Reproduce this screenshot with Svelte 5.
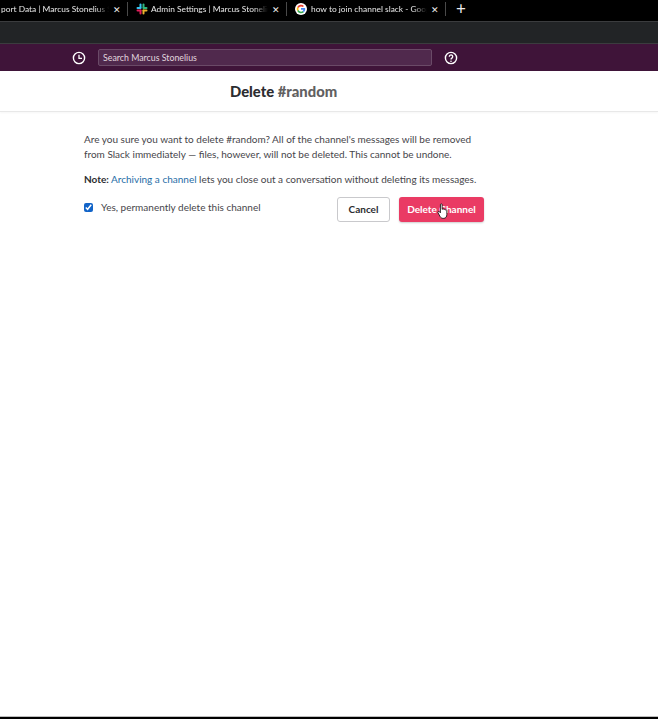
<script lang="ts">
  let confirmed = true;
  const slackBars = ["#36c5f0", "#2eb67d", "#ecb22e", "#e01e5a"];
</script>

<div class="page">
  <div class="tabs">
    <div class="tab first">
      <span class="tab-title">port Data | Marcus Stonelius Sl</span>
      <span class="close">✕</span>
    </div>
    <div class="tab second">
      <svg class="fav" viewBox="0 0 12 12" width="12" height="12">
        <rect x="3.5" y="0.5" width="2" height="5" rx="1" fill={slackBars[0]} />
        <rect x="0.5" y="4" width="5" height="2" rx="1" fill={slackBars[0]} />
        <rect x="6.5" y="0.5" width="2" height="5" rx="1" fill={slackBars[1]} />
        <rect x="6.5" y="4" width="5" height="2" rx="1" fill={slackBars[1]} />
        <rect x="6.5" y="6.5" width="2" height="5" rx="1" fill={slackBars[2]} />
        <rect x="6.5" y="6.5" width="5" height="2" rx="1" fill={slackBars[2]} />
        <rect x="3.5" y="6.5" width="2" height="5" rx="1" fill={slackBars[3]} />
        <rect x="0.5" y="6.5" width="5" height="2" rx="1" fill={slackBars[3]} />
      </svg>
      <span class="tab-title">Admin Settings | Marcus Stonelius</span>
      <span class="close">✕</span>
    </div>
    <div class="tab third">
      <svg class="fav" viewBox="0 0 12 12" width="12" height="12">
        <circle cx="6" cy="6" r="6" fill="#fff" />
        <path d="M6 3.400a2.600 2.600 0 0 1 1.800.7l1.200-1.200A4.300 4.300 0 0 0 2.200 4l1.400 1.100A2.600 2.600 0 0 1 6 3.400z" fill="#ea4335" />
        <path d="M2.200 4a4.300 4.300 0 0 0 0 4l1.400-1.100a2.600 2.600 0 0 1 0-1.800z" fill="#fbbc05" />
        <path d="M2.200 8a4.300 4.300 0 0 0 6.700 1.200L7.600 8.100a2.600 2.600 0 0 1-4-1.200z" fill="#34a853" />
        <path d="M10.200 6c0-.3 0-.6-.1-.9H6v1.700h2.400a2 2 0 0 1-.8 1.300l1.300 1.100c.8-.7 1.300-1.800 1.300-3.200z" fill="#4285f4" />
      </svg>
      <span class="tab-title">how to join channel slack - Goog</span>
      <span class="close">✕</span>
    </div>
    <span class="new-tab">+</span>
  </div>

  <div class="toolbar"></div>

  <div class="slack-bar">
    <svg class="bar-icon" viewBox="0 0 14 14" width="14" height="14">
      <circle cx="7" cy="7" r="5.600" fill="none" stroke="#fff" stroke-width="1.400" />
      <path d="M7 3.800V7.300H10" fill="none" stroke="#fff" stroke-width="1.300" />
    </svg>
    <div class="search">Search Marcus Stonelius</div>
    <svg class="bar-icon" viewBox="0 0 14 14" width="14" height="14">
      <circle cx="7" cy="7" r="5.600" fill="none" stroke="#fff" stroke-width="1.400" />
      <path d="M5.300 5.700a1.700 1.700 0 1 1 2.600 1.400c-.6.4-.9.7-.9 1.300" fill="none" stroke="#fff" stroke-width="1.300" />
      <circle cx="7" cy="10.200" r=".8" fill="#fff" />
    </svg>
  </div>

  <header class="head">
    <h1>Delete <span class="channel">#random</span></h1>
  </header>

  <main class="body">
    <p class="warning">
      Are you sure you want to delete #random? All of the channel's messages will be removed
      from Slack immediately — files, however, will not be deleted. This cannot be undone.
    </p>
    <p class="note">
      <strong>Note:</strong> <a href="#archive">Archiving a channel</a> lets you close out a conversation without deleting its messages.
    </p>
    <div class="actions">
      <label class="confirm">
        <input type="checkbox" bind:checked={confirmed} />
        Yes, permanently delete this channel
      </label>
      <button class="btn cancel">Cancel</button>
      <div class="danger-wrap">
        <button class="btn danger">Delete Channel</button>
        <svg class="cursor" viewBox="0 0 14 19" width="12" height="17">
          <path d="M4 1.500c0-1.300 2-1.300 2 0V7l.5-.3c.5-.4 1.500-.2 1.700.4.500-.4 1.400-.2 1.700.5.600-.3 1.500 0 1.600.8V13c0 2.500-1.300 4.500-3.500 4.500H7c-1.500 0-2.500-.8-3.300-2L1.200 11c-.7-1.300.8-2.200 1.700-1.200L4 11z" fill="#fff" stroke="#111" stroke-width="1" stroke-linejoin="round" />
        </svg>
      </div>
    </div>
  </main>

  <div class="bottom"></div>
</div>

<style>
  :global(body) {
    margin: 0;
    background: #fff;
  }
  .page {
    height: 719px;
    width: 658px;
    overflow: hidden;
    display: flex;
    flex-direction: column;
    font-family: Lato, "Open Sans", sans-serif;
    color: #2c2d30;
  }
  .tabs {
    height: 21px;
    flex: none;
    background: #000;
    display: flex;
    align-items: center;
    color: #e8e8e8;
    font-family: Lato, sans-serif;
    font-size: 8.4px;
    box-sizing: border-box;
    padding-bottom: 3px;
  }
  .tab {
    display: flex;
    align-items: center;
    height: 14px;
    flex: none;
    box-sizing: border-box;
    border-right: 1px solid #4a4a4a;
  }
  .tab.first {
    width: 128px;
    justify-content: flex-end;
    padding-right: 6px;
  }
  .tab.first .tab-title {
    flex: none;
    width: 108px;
    text-align: left;
  }
  .tab.second {
    width: 159px;
    padding-left: 8px;
    padding-right: 6px;
  }
  .tab.third {
    width: 159px;
    padding-left: 8px;
    padding-right: 6px;
  }
  .fav {
    flex: none;
    margin-right: 3px;
  }
  .tab.third .fav {
    margin-right: 4px;
  }
  .tab-title {
    flex: 1;
    min-width: 0;
    white-space: nowrap;
    overflow: hidden;
    mask-image: linear-gradient(to right, #000 88%, transparent);
  }
  .close {
    flex: none;
    font-size: 9px;
    color: #eee;
    margin-left: 4px;
  }
  .new-tab {
    margin-left: 10px;
    font-size: 17px;
    line-height: 14px;
    color: #eee;
  }
  .toolbar {
    height: 23px;
    flex: none;
    box-sizing: border-box;
    background: #222426;
    border-top: 1px solid #3b3c3e;
    border-bottom: 1px solid #3b3c3e;
  }
  .slack-bar {
    height: 27px;
    flex: none;
    background: #3f1439;
    display: flex;
    align-items: center;
    padding-left: 72px;
    box-sizing: border-box;
  }
  .search {
    width: 334px;
    height: 17px;
    margin: 0 12px 0 12px;
    box-sizing: border-box;
    padding-left: 4px;
    background: #50294d;
    border: 1px solid #6a4a67;
    border-radius: 2px;
    color: #e0d6df;
    font-size: 8.8px;
    line-height: 15px;
  }
  .bar-icon {
    flex: none;
  }
  .head {
    height: 41px;
    flex: none;
    box-sizing: border-box;
    border-bottom: 1px solid #e8e8e8;
    box-shadow: 0 1px 2px rgba(0, 0, 0, 0.04);
    padding-left: 230px;
  }
  h1 {
    margin: 0;
    font-size: 14.8px;
    line-height: 40px;
    font-weight: 900;
    color: #2c2d30;
  }
  .channel {
    color: #616061;
  }
  .body {
    flex: 1;
    width: 400px;
    padding: 20px 0 0 84px;
    font-size: 10px;
    line-height: 15px;
    color: #46454a;
  }
  p {
    margin: 0;
  }
  .warning {
    margin-bottom: 10px;
  }
  .note {
    margin-bottom: 9px;
    white-space: nowrap;
  }
  .note strong {
    color: #2c2d30;
  }
  a {
    color: #1f6da6;
    text-decoration: none;
  }
  .actions {
    display: flex;
    align-items: center;
    height: 26px;
  }
  .confirm {
    display: flex;
    align-items: center;
    flex: 1;
    margin-top: -3px;
  }
  .confirm input {
    width: 9px;
    height: 9px;
    margin: 0 8px 0 0;
    accent-color: #1264c8;
  }
  .btn {
    height: 25px;
    border-radius: 3px;
    font-family: inherit;
    font-size: 10px;
    font-weight: 700;
    padding: 0;
  }
  .cancel {
    width: 53px;
    margin-right: 9px;
    background: #fff;
    color: #2c2d30;
    border: 1px solid #c9c9cc;
  }
  .danger-wrap {
    position: relative;
    display: flex;
  }
  .danger {
    width: 85px;
    background: #ea3b64;
    color: #fff;
    border: none;
    box-shadow: 0 1px 2px rgba(0, 0, 0, 0.2);
  }
  .cursor {
    position: absolute;
    left: 38px;
    top: 6px;
  }
  .bottom {
    height: 3px;
    flex: none;
    background: #000;
    border-top: 1px solid #bdbdbd;
    box-sizing: border-box;
  }
</style>
